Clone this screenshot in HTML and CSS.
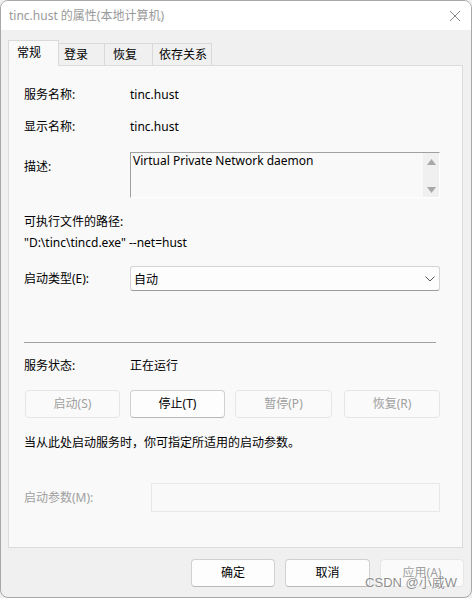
FILE: index.html
```html
<!DOCTYPE html>
<html lang="zh-CN">
<head>
<meta charset="utf-8">
<title>tinc.hust 的属性(本地计算机)</title>
<link rel="stylesheet" href="styles.css">
</head>
<body>
<div class="window">
  <div class="titlebar">
    <span class="title">tinc.hust 的属性(本地计算机)</span>
    <svg class="close" width="12" height="12" viewBox="0 0 12 12"><path d="M1 1 L11 11 M11 1 L1 11" stroke="#8a8a8a" stroke-width="1" fill="none"/></svg>
  </div>
  <div class="tabs">
    <div class="tab tab-active tab-1">常规</div>
    <div class="tab tab-2">登录</div>
    <div class="tab tab-3">恢复</div>
    <div class="tab tab-4">依存关系</div>
  </div>
  <div class="panel">
    <div class="row row-first">
      <span class="label">服务名称:</span>
      <span class="value">tinc.hust</span>
    </div>
    <div class="row row-second">
      <span class="label">显示名称:</span>
      <span class="value">tinc.hust</span>
    </div>
    <div class="row row-desc">
      <span class="label label-desc">描述:</span>
      <div class="textarea">
        <div class="textarea-text">Virtual Private Network daemon</div>
        <div class="scrollbar">
          <svg width="9" height="6" viewBox="0 0 9 6"><path d="M4.5 0 L9 6 L0 6 Z" fill="#a8a8a8"/></svg>
          <svg width="9" height="6" viewBox="0 0 9 6"><path d="M0 0 L9 0 L4.5 6 Z" fill="#a8a8a8"/></svg>
        </div>
      </div>
    </div>
    <div class="exec-label">可执行文件的路径:</div>
    <div class="exec-path">"D:\tinc\tincd.exe" --net=hust</div>
    <div class="row row-type">
      <span class="label">启动类型(E):</span>
      <div class="select">
        <span>自动</span>
        <svg width="10" height="6" viewBox="0 0 10 6"><path d="M0.5 0.5 L5 5 L9.5 0.5" stroke="#555" stroke-width="1" fill="none"/></svg>
      </div>
    </div>
    <div class="separator"></div>
    <div class="row row-status">
      <span class="label">服务状态:</span>
      <span class="value">正在运行</span>
    </div>
    <div class="btn-row">
      <div class="btn btn-disabled">启动(S)</div>
      <div class="btn">停止(T)</div>
      <div class="btn btn-disabled">暂停(P)</div>
      <div class="btn btn-disabled btn-last">恢复(R)</div>
    </div>
    <div class="hint">当从此处启动服务时，你可指定所适用的启动参数。</div>
    <div class="row row-params">
      <span class="label label-disabled label-params">启动参数(M):</span>
      <div class="input-disabled"></div>
    </div>
  </div>
  <div class="footer">
    <div class="btn btn-footer">确定</div>
    <div class="btn btn-footer">取消</div>
    <div class="btn btn-footer btn-disabled">应用(A)</div>
  </div>
  <div class="watermark">CSDN @小威W</div>
</div>
</body>
</html>
```

FILE: styles.css
```css
* {
  box-sizing: border-box;
}

html, body {
  margin: 0;
  padding: 0;
  background: #f0f0f0;
}

body {
  font-family: "Noto Sans", "Noto Sans CJK SC", sans-serif;
  font-size: 12px;
  color: #000;
}

.window {
  position: relative;
  width: 472px;
  height: 598px;
  background: #f0f0f0;
  border: 1px solid #a8a8a8;
  border-radius: 8px;
  overflow: hidden;
}

.titlebar {
  height: 29px;
  background: #ffffff;
  display: flex;
  align-items: center;
  justify-content: space-between;
  padding: 0 9px 0 8px;
}

.title {
  color: #999999;
  font-size: 12px;
  line-height: 16px;
}

.close {
  display: block;
  margin-right: 1px;
}

.tabs {
  height: 35px;
  display: flex;
  align-items: flex-end;
  padding-left: 7px;
}

.tab {
  height: 22px;
  line-height: 21px;
  border: 1px solid #d9d9d9;
  border-bottom: none;
  border-left: none;
  background: #f0f0f0;
  white-space: nowrap;
}

.tab-active {
  position: relative;
  z-index: 1;
  height: 26px;
  margin-bottom: -1px;
  line-height: 24px;
  background: #f9f9f9;
  border-left: 1px solid #d9d9d9;
}

.tab-1 { width: 51px; padding-left: 8px; }
.tab-2 { width: 46px; padding-left: 5px; }
.tab-3 { width: 48px; padding-left: 8px; }
.tab-4 { width: 59px; padding-left: 6px; }

.panel {
  margin: 0 8px 0 7px;
  height: 483px;
  background: #f9f9f9;
  border: 1px solid #dcdcdc;
  padding: 19px 22px 0 15px;
}

.row {
  display: flex;
  align-items: center;
}

.label {
  width: 106px;
  flex: none;
  line-height: 20px;
}

.value {
  line-height: 20px;
  padding-left: 0;
}

.row-second {
  margin-top: 12px;
}

.row-desc {
  margin-top: 15px;
  align-items: flex-start;
}

.label-desc {
  padding-top: 5px;
}

.textarea {
  flex: 1;
  height: 46px;
  display: flex;
  border-top: 1px solid #a0a0a0;
  border-left: 1px solid #a0a0a0;
  border-right: 1px solid #ffffff;
  border-bottom: 1px solid #ffffff;
  background: #f9f9f9;
}

.textarea-text {
  flex: 1;
  padding: 0 0 0 2px;
  line-height: 16px;
}

.scrollbar {
  width: 16px;
  background: #f0f0f0;
  display: flex;
  flex-direction: column;
  justify-content: space-between;
  align-items: center;
  padding: 6px 0 4px;
}

.scrollbar svg {
  display: block;
}

.exec-label {
  margin-top: 14px;
  line-height: 20px;
}

.exec-path {
  margin-top: 1px;
  line-height: 20px;
}

.row-type {
  margin-top: 13px;
}

.select {
  flex: 1;
  height: 25px;
  background: #fdfdfd;
  border: 1px solid #d4d4d4;
  border-bottom-color: #9c9c9c;
  border-radius: 3px;
  display: flex;
  align-items: center;
  justify-content: space-between;
  padding: 0 4px 0 3px;
}

.separator {
  margin: 51px 4px 0 0;
  height: 1px;
  background: #a0a0a0;
}

.row-status {
  margin-top: 13px;
}

.btn-row {
  margin: 14px 0 0 1px;
  display: grid;
  grid-template-columns: 95px 95px 97px 98px;
  column-gap: 10px;
}

.btn-last {
  margin-left: 2px;
}

.btn {
  height: 28px;
  border: 1px solid #d0d0d0;
  border-bottom-color: #b8b8b8;
  border-radius: 4px;
  background: #fdfdfd;
  display: flex;
  align-items: center;
  justify-content: center;
  line-height: 16px;
}

.btn-disabled {
  color: #a0a0a0;
  background: #fafafa;
  border-color: #e6e6e6;
}

.hint {
  margin-top: 15px;
  line-height: 20px;
}

.row-params {
  margin-top: 30px;
}

.label-params {
  width: 127px;
}

.label-disabled {
  color: #a0a0a0;
}

.input-disabled {
  flex: 1;
  height: 29px;
  border: 1px solid #e8e8e8;
  background: #f9f9f9;
}

.footer {
  display: flex;
  justify-content: flex-end;
  gap: 10px;
  padding: 11px 7px 0 0;
}

.btn-footer {
  width: 84px;
}

.btn-footer:nth-child(2) {
  width: 85px;
}

.watermark {
  position: absolute;
  right: 14px;
  bottom: 7px;
  font-family: "Liberation Sans", "Noto Sans CJK SC", sans-serif;
  font-size: 13px;
  line-height: 15px;
  color: rgba(120, 120, 120, 0.85);
  text-shadow: 0 0 2px rgba(255, 255, 255, 0.9);
}
```
